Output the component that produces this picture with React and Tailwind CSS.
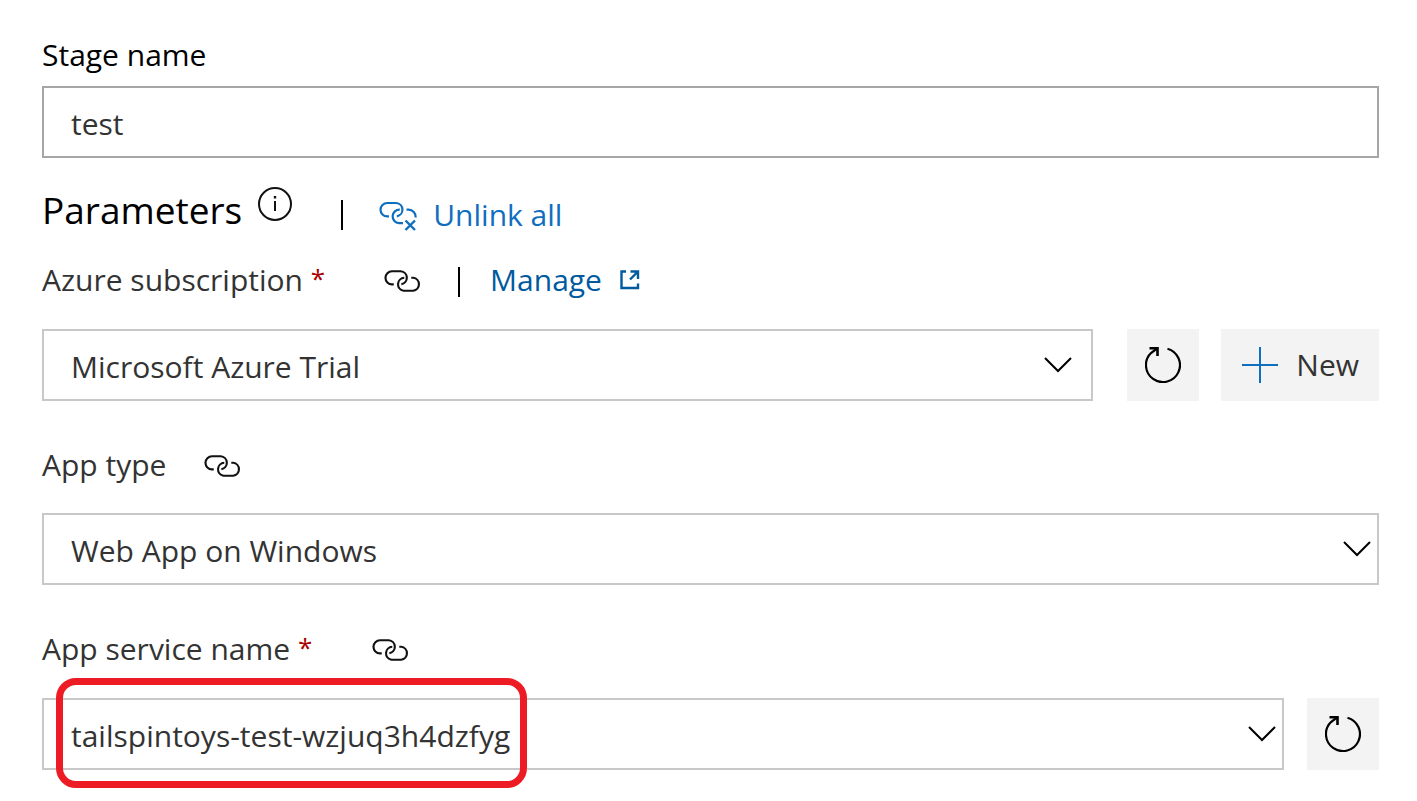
function LinkIcon() {
  return (
    <svg width="37" height="24" viewBox="0 0 38 24" fill="none" stroke="#111" strokeWidth="2.200" aria-hidden="true">
      <path d="M10 15.400H8.200A6.700 6.700 0 0 1 8.200 2H17.200A6.700 6.700 0 0 1 17.800 15.300" />
      <path d="M20.800 8.700A6.700 6.700 0 0 0 20 22H30A6.700 6.700 0 0 0 30 8.700H28" />
    </svg>
  );
}

function UnlinkIcon() {
  return (
    <svg width="38" height="32" viewBox="0 0 38 32" fill="none" stroke="#106ebe" strokeWidth="2.200" aria-hidden="true">
      <path d="M10 17.400H8.200A6.700 6.700 0 0 1 8.200 4H17.200A6.700 6.700 0 0 1 17.800 17.300" />
      <path d="M20.800 10.700A6.700 6.700 0 0 0 20 24.200H24" />
      <path d="M27.500 10.700H29.500A7 7 0 0 1 36.500 18.500" />
      <path d="M26.500 21.500L36 31M36 21.500L26.500 31" strokeWidth="2.400" />
    </svg>
  );
}

function InfoIcon() {
  return (
    <svg width="36" height="36" viewBox="0 0 36 36" fill="none" stroke="#111" strokeWidth="2" aria-hidden="true">
      <circle cx="18" cy="18" r="16" />
      <path d="M18 15V25" />
      <path d="M18 10V12.500" strokeWidth="2.400" />
    </svg>
  );
}

function ExternalIcon() {
  return (
    <svg width="20" height="20" viewBox="0 0 20 20" fill="none" stroke="#005a9e" strokeWidth="2.400" aria-hidden="true">
      <path d="M6 1.500H1.500V18H18V13.500" />
      <path d="M10.500 1.500H18V9M18 1.500L10 9.500" />
    </svg>
  );
}

function RefreshIcon() {
  return (
    <svg width="36" height="36" viewBox="0 0 36 36" fill="none" stroke="#000" strokeWidth="2.200" aria-hidden="true">
      <path d="M22.500 1.700A17 17 0 1 1 6 6L12 1.500" />
      <path d="M4.500 1.200H12.500V9" strokeWidth="2.600" />
    </svg>
  );
}

function PlusIcon() {
  return (
    <svg width="36" height="36" viewBox="0 0 36 36" stroke="#106ebe" strokeWidth="2" aria-hidden="true">
      <path d="M18 0V36M0 18H36" />
    </svg>
  );
}

function Divider() {
  return <span className="h-7.5 w-0.5 bg-black" aria-hidden="true" />;
}

function Select({ id, value, wide = false }) {
  return (
    <div className="relative min-w-0 flex-1">
      <select
        id={id}
        className="block h-18 w-full appearance-none border-2 border-[#c8c8c8] bg-white pt-1 pr-16 pl-[27px] text-[#333] outline-none"
      >
        <option>{value}</option>
      </select>
      <svg
        className={
          wide
            ? "pointer-events-none absolute top-7 right-[21px] h-4 w-7"
            : "pointer-events-none absolute top-7 right-2 h-4 w-7"
        }
        viewBox="0 0 28 16"
        fill="none"
        stroke="#000"
        strokeWidth="2"
        aria-hidden="true"
      >
        <path d="M1 1L14 14L27 1" />
      </svg>
    </div>
  );
}

function RefreshButton({ label }) {
  return (
    <button type="button" aria-label={label} className="flex size-18 shrink-0 items-center justify-center bg-[#f3f3f3]">
      <RefreshIcon />
    </button>
  );
}

function LinkButton({ label }) {
  return (
    <button type="button" aria-label={label} className="pt-0.5">
      <LinkIcon />
    </button>
  );
}

function Required() {
  return <span className="align-[3px] text-[26px] leading-none text-[#a80000]">*</span>;
}

export default function App() {
  return (
    <form className="bg-white pt-[31px] pr-[38px] pb-8 pl-[42px] font-['Open_Sans','Noto_Sans',sans-serif] text-[30px] leading-12 text-[#333]">
      <label htmlFor="stage" className="block text-black">
        Stage name
      </label>
      <input
        id="stage"
        type="text"
        defaultValue="test"
        className="mt-[7px] block h-18 w-full border-2 border-[#a6a6a6] px-[27px] pt-0.5 text-[#333] outline-none"
      />

      <div className="mt-6 flex h-[66px] items-center">
        <h2 className="pb-2.5 text-[37px] text-black">Parameters</h2>
        <button type="button" aria-label="About parameters" className="mr-12 mb-[22px] ml-[15px]">
          <InfoIcon />
        </button>
        <Divider />
        <button type="button" className="ml-9 flex items-center gap-4 text-[#106ebe]">
          <UnlinkIcon />
          Unlink all
        </button>
      </div>

      <div className="mt-2 flex h-12 items-center">
        <label htmlFor="subscription" className="mr-[59px]">
          Azure subscription <Required />
        </label>
        <LinkButton label="Link Azure subscription" />
        <span className="mr-[30px] ml-[37px] flex pt-1">
          <Divider />
        </span>
        <a href="#manage" className="flex items-center gap-[18px] text-[#005a9e]">
          Manage
          <ExternalIcon />
        </a>
      </div>
      <div className="mt-[25px] flex">
        <Select id="subscription" value="Microsoft Azure Trial" wide />
        <div className="ml-[34px] flex gap-[22px]">
          <RefreshButton label="Refresh subscriptions" />
          <button type="button" className="flex h-18 items-center gap-[18px] bg-[#f3f3f3] pr-5 pl-[21px]">
            <PlusIcon />
            New
          </button>
        </div>
      </div>

      <div className="mt-10 flex h-12 items-center gap-[38px]">
        <label htmlFor="type">App type</label>
        <LinkButton label="Link app type" />
      </div>
      <div className="mt-6 flex">
        <Select id="type" value="Web App on Windows" />
      </div>

      <div className="mt-10 flex h-12 items-center gap-15">
        <label htmlFor="service">
          App service name <Required />
        </label>
        <LinkButton label="Link app service name" />
      </div>
      <div className="relative mt-[25px] flex gap-[23px]">
        <Select id="service" value="tailspintoys-test-wzjuq3h4dzfyg" />
        <RefreshButton label="Refresh app services" />
        <div
          className="pointer-events-none absolute -top-5 left-3.5 h-[110px] w-[471px] rounded-[20px] border-[7px] border-[#ed1c24]"
          aria-hidden="true"
        />
      </div>
    </form>
  );
}
